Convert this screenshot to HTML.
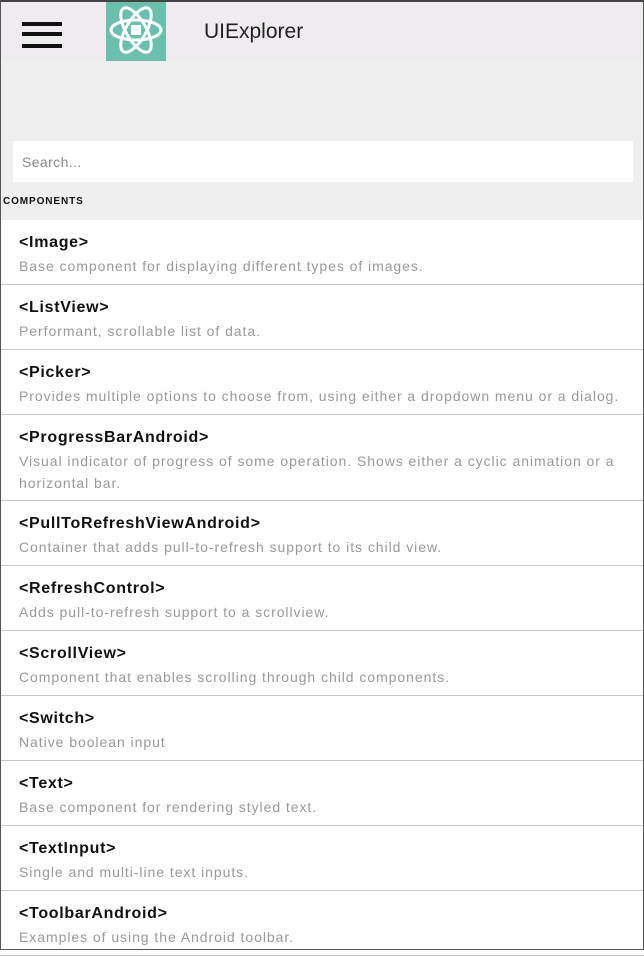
<!DOCTYPE html>
<html><head><style>
*{margin:0;padding:0;box-sizing:border-box}
body{width:644px;height:950px;overflow:hidden;background:#fff;font-family:"Liberation Sans",sans-serif;position:relative}
.frame{position:absolute;inset:0;border:1px solid #555;border-top:2px solid #444;pointer-events:none;z-index:5}
.hdr{position:absolute;left:0;top:0;width:644px;height:61px;background:#efecef}
.hb{position:absolute;left:22px;width:40px;height:4px;background:#111}
.logo{position:absolute;left:106px;top:0;width:60px;height:61px;background:#6cbfad}
.title{position:absolute;left:204px;top:20px;font-size:21px;color:#222}
.gray{position:absolute;left:0;top:61px;width:644px;height:159px;background:#efefef}
.search{position:absolute;left:13px;top:141px;width:620px;height:41px;background:#fff;font-size:14px;color:#888;padding:13px 0 0 9px;letter-spacing:.4px}
.sec{position:absolute;left:3px;top:196px;font-size:10px;font-weight:bold;color:#111;letter-spacing:.9px}
.list{position:absolute;left:0;top:220px;width:644px}
.row{border-bottom:1px solid #c8c8c8;padding:13px 0 0 19px;height:65px}
.row.t{height:86px}
.row b{display:block;font-size:16px;font-weight:bold;color:#111;line-height:20px;letter-spacing:.7px}
.row span{display:block;font-size:14px;color:#999;line-height:22px;padding-right:20px;letter-spacing:.95px;margin-top:2px}
</style></head><body>
<div class="hdr">
<div class="hb" style="top:22px"></div><div class="hb" style="top:32px"></div><div class="hb" style="top:44px"></div>
<div class="logo"><svg width="60" height="61" viewBox="0 0 60 61"><g fill="none" stroke="#fff" stroke-width="3"><ellipse cx="30" cy="30" rx="25" ry="10"/><ellipse cx="30" cy="30" rx="25" ry="10" transform="rotate(60 30 30)"/><ellipse cx="30" cy="30" rx="25" ry="10" transform="rotate(120 30 30)"/></g><rect x="25" y="25" width="10" height="10" fill="#fff"/></svg></div>
<div class="title">UIExplorer</div>
</div>
<div class="gray"></div>
<div class="search">Search...</div>
<div class="sec">COMPONENTS</div>
<div class="list">
<div class="row"><b>&lt;Image&gt;</b><span>Base component for displaying different types of images.</span></div>
<div class="row"><b>&lt;ListView&gt;</b><span>Performant, scrollable list of data.</span></div>
<div class="row"><b>&lt;Picker&gt;</b><span>Provides multiple options to choose from, using either a dropdown menu or a dialog.</span></div>
<div class="row t"><b>&lt;ProgressBarAndroid&gt;</b><span>Visual indicator of progress of some operation. Shows either a cyclic animation or a horizontal bar.</span></div>
<div class="row"><b>&lt;PullToRefreshViewAndroid&gt;</b><span>Container that adds pull-to-refresh support to its child view.</span></div>
<div class="row"><b>&lt;RefreshControl&gt;</b><span>Adds pull-to-refresh support to a scrollview.</span></div>
<div class="row"><b>&lt;ScrollView&gt;</b><span>Component that enables scrolling through child components.</span></div>
<div class="row"><b>&lt;Switch&gt;</b><span>Native boolean input</span></div>
<div class="row"><b>&lt;Text&gt;</b><span>Base component for rendering styled text.</span></div>
<div class="row"><b>&lt;TextInput&gt;</b><span>Single and multi-line text inputs.</span></div>
<div class="row"><b>&lt;ToolbarAndroid&gt;</b><span>Examples of using the Android toolbar.</span></div>
</div>
<div class="frame"></div>
</body></html>
